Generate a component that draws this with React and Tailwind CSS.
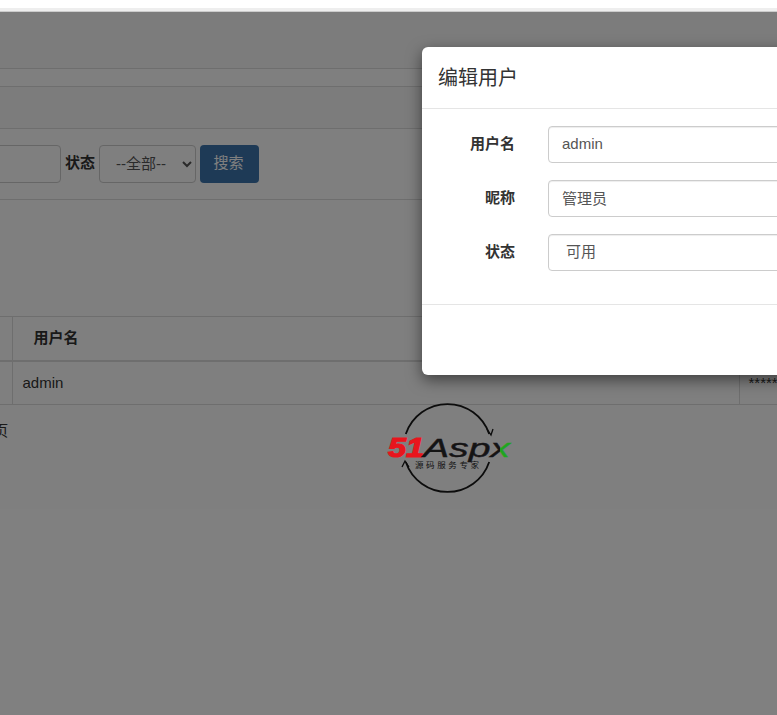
const FONT = "font-['Liberation_Sans','Noto_Sans_CJK_SC',sans-serif]";

function Logo() {
  return (
    <svg className="absolute left-[386px] top-[402px]" width="126" height="92" viewBox="0 0 126 92" fill="none">
      <defs>
        <linearGradient id="aspx" gradientUnits="userSpaceOnUse" x1="0" y1="0" x2="126" y2="0">
          <stop offset="0.905" stopColor="#141414" />
          <stop offset="0.905" stopColor="#1fa51f" />
        </linearGradient>
      </defs>
      <path d="M19.8 32 A44 44 0 0 1 103.2 32" stroke="#0c0c0c" strokeWidth="1.8" />
      <path d="M101 27 L105 33 L107 27" stroke="#0c0c0c" strokeWidth="1.3" />
      <path d="M103.2 60 A44 44 0 0 1 19.8 60" stroke="#0c0c0c" strokeWidth="1.8" />
      <path d="M16 65 L19 59 L23 65" stroke="#0c0c0c" strokeWidth="1.3" />
      <text x="2" y="55" fill="#e8151d" stroke="#e8151d" strokeWidth="1.2" fontFamily="Liberation Sans" fontWeight="700" fontStyle="italic" fontSize="27" textLength="36" lengthAdjust="spacingAndGlyphs">51</text>
      <text x="37" y="55" fill="url(#aspx)" stroke="url(#aspx)" strokeWidth="0.4" fontFamily="Liberation Sans" fontStyle="italic" fontSize="26" textLength="87" lengthAdjust="spacingAndGlyphs">Aspx</text>
      <text x="29" y="66" fill="#111" fontFamily="Noto Sans CJK SC" fontSize="8.5" textLength="64" lengthAdjust="spacing">源码服务专家</text>
    </svg>
  );
}

function Field({ label, children }) {
  return (
    <div className="flex items-center gap-[33px]">
      <label className="w-[93px] text-right text-[15px] font-bold text-[#333]">{label}</label>
      {children}
    </div>
  );
}

const control = "h-[37px] w-[400px] rounded-[4px] border border-[#ccc] bg-white px-[13px] pb-[2px] text-[15px] text-[#555] shadow-[inset_0_1px_1px_rgba(0,0,0,0.075)] outline-none";

export default function App() {
  return (
    <div className={`${FONT} relative h-[715px] w-[777px] overflow-hidden bg-white text-[15px] text-[#333]`}>
      <div className="h-[8px] bg-white" />
      <div className="h-[4px] border-b border-[#ccc] bg-[#eee]" />

      <main>
        <div className="h-[56px] bg-[#f8f8f8]" />
        <div className="h-[18px] border-t border-[#ddd]" />
        <div className="h-[43px] border-y border-[#ddd] bg-[#f8f8f8]" />
        <div className="flex h-[71px] items-center gap-[4px] border-b border-[#ddd] pb-[1px]">
          <input className="-ml-[39px] h-[38px] w-[100px] rounded-[4px] border border-[#ccc] bg-white" />
          <span className="text-[15px] font-bold">状态</span>
          <select defaultValue="all" className="h-[38px] w-[97px] rounded-[4px] border border-[#ccc] bg-white pl-[12px] text-[15px] text-[#555]">
            <option value="all">--全部--</option>
          </select>
          <button className="h-[38px] w-[59px] rounded-[4px] bg-[#3d75ad] pr-[2px] text-[15px] text-white">搜索</button>
        </div>

        <table className="mt-[116px] w-[1000px] table-fixed border-collapse">
          <thead>
            <tr className="h-[44px] border-y border-b-2 border-[#ddd] text-left">
              <th className="w-[12px] border-r border-[#ddd]" />
              <th className="w-[727px] border-r border-[#ddd] pl-[21px] text-[15px]">用户名</th>
              <th />
            </tr>
          </thead>
          <tbody>
            <tr className="h-[44px] border-b border-[#ddd]">
              <td className="border-r border-[#ddd]" />
              <td className="border-r border-[#ddd] pl-[10px]">admin</td>
              <td className="pl-[9px]">**********</td>
            </tr>
          </tbody>
        </table>
        <p className="-ml-[30px] mt-[15px] text-[15px]">共1页</p>
      </main>

      <div className="absolute inset-x-0 bottom-0 top-[12px] bg-black/50" />
      <Logo />

      <section className="absolute left-[422px] top-[47px] w-[600px] rounded-[6px] bg-white shadow-[0_5px_15px_rgba(0,0,0,0.5)]">
        <header className="flex h-[62px] items-center border-b border-[#e5e5e5] pl-[16px] pt-[1px]">
          <h2 className="text-[20px] font-normal text-[#333]">编辑用户</h2>
        </header>
        <div className="flex h-[196px] flex-col gap-[17px] border-b border-[#e5e5e5] pt-[17px]">
          <Field label="用户名"><input readOnly defaultValue="admin" className={control} /></Field>
          <Field label="昵称"><input readOnly defaultValue="管理员" className={control} /></Field>
          <Field label="状态">
            <select defaultValue="1" className={control}>
              <option value="1">可用</option>
            </select>
          </Field>
        </div>
        <footer className="h-[70px]" />
      </section>
    </div>
  );
}
